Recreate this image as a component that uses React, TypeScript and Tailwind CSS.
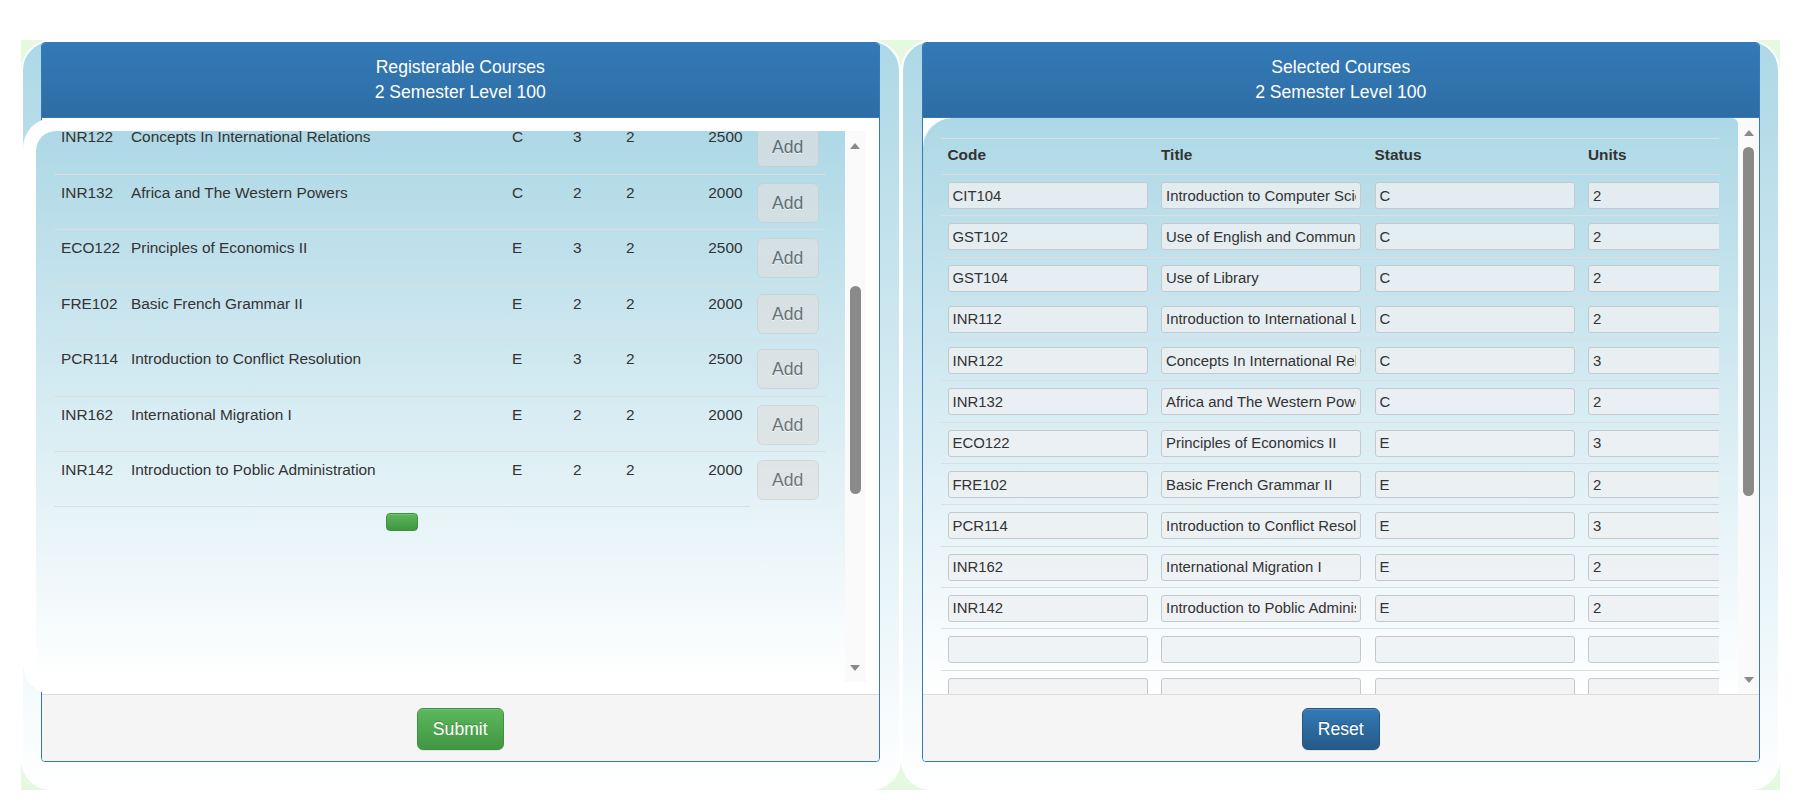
import React from 'react';

const registerable = [
  ['INR122', 'Concepts In International Relations', 'C', '3', '2', '2500'],
  ['INR132', 'Africa and The Western Powers', 'C', '2', '2', '2000'],
  ['ECO122', 'Principles of Economics II', 'E', '3', '2', '2500'],
  ['FRE102', 'Basic French Grammar II', 'E', '2', '2', '2000'],
  ['PCR114', 'Introduction to Conflict Resolution', 'E', '3', '2', '2500'],
  ['INR162', 'International Migration I', 'E', '2', '2', '2000'],
  ['INR142', 'Introduction to Poblic Administration', 'E', '2', '2', '2000'],
];

const selected = [
  ['CIT104', 'Introduction to Computer Science', 'C', '2'],
  ['GST102', 'Use of English and Communication Skills', 'C', '2'],
  ['GST104', 'Use of Library', 'C', '2'],
  ['INR112', 'Introduction to International Law', 'C', '2'],
  ['INR122', 'Concepts In International Relations', 'C', '3'],
  ['INR132', 'Africa and The Western Powers', 'C', '2'],
  ['ECO122', 'Principles of Economics II', 'E', '3'],
  ['FRE102', 'Basic French Grammar II', 'E', '2'],
  ['PCR114', 'Introduction to Conflict Resolution', 'E', '3'],
  ['INR162', 'International Migration I', 'E', '2'],
  ['INR142', 'Introduction to Poblic Administration', 'E', '2'],
  ['', '', '', ''],
  ['', '', '', ''],
  ['', '', '', ''],
];

function Arrow({ down }: { down?: boolean }) {
  return (
    <svg width="10" height="6" viewBox="0 0 10 6" className="block flex-shrink-0">
      <polygon points={down ? '0,0 10,0 5,6' : '0,6 10,6 5,0'} fill="#8a8a8a" />
    </svg>
  );
}

interface ScrollbarProps {
  thumbOffset: string;
  thumbHeight: string;
}

function Scrollbar({ thumbOffset, thumbHeight }: ScrollbarProps) {
  return (
    <div className="flex w-[21px] flex-shrink-0 flex-col items-center bg-[#fafafa] pt-[12px] pb-[11px]">
      <Arrow />
      <div className={`w-[11px] rounded-full bg-[#8a8a8a] ${thumbOffset} ${thumbHeight}`} />
      <div className="mt-auto">
        <Arrow down />
      </div>
    </div>
  );
}

function PanelHeading({ title }: { title: string }) {
  return (
    <div className="flex h-[75px] flex-col items-center justify-center rounded-t-[3px] border-b border-[#337ab7] bg-linear-to-b from-[#337ab7] to-[#2e6da4] text-[17.6px] leading-[25px] text-white">
      <div>{title}</div>
      <div>2 Semester Level 100</div>
    </div>
  );
}

function RegisterablePanel() {
  return (
    <div className="rounded-[4px] border border-[#337ab7] bg-white">
      <PanelHeading title="Registerable Courses" />

      <div className="h-[576px] bg-white">
        <div className="-ml-[19px] h-full rounded-l-[30px] bg-white pt-[13px] pr-[13px] pb-[12px] pl-[13px]">
          <div className="flex h-full">
            <div className="flex-1 overflow-hidden rounded-l-[20px] bg-linear-to-b from-[#add8e6] to-white pr-[19px] pl-[18px]">
              <div className="-mt-[11.6px] text-[15.4px] leading-[22px] text-[#333]">
                {registerable.map((row, i) => {
                  const last = i === registerable.length - 1;
                  return (
                    <div key={row[0]} className="flex h-[55.45px]">
                      <div className="flex w-[696px] border-b border-[#dddddd] pt-[7px]">
                        <div className="w-[70px] pl-[7px]">{row[0]}</div>
                        <div className="w-[381px] pl-[7px]">{row[1]}</div>
                        <div className="w-[61px] pl-[7px]">{row[2]}</div>
                        <div className="w-[53px] pl-[7px]">{row[3]}</div>
                        <div className="w-[61px] pl-[7px]">{row[4]}</div>
                        <div className="flex-1 pr-[7px] text-right">{row[5]}</div>
                      </div>
                      <div
                        className={`w-[76px] pl-[7px] ${last ? '' : 'border-b border-[#dddddd]'}`}
                      >
                        <button
                          type="button"
                          disabled
                          className="mt-[8px] flex h-[40px] w-[62px] items-center justify-center rounded-[6px] border border-[#cccccc] bg-[#e0e0e0] text-[17.6px] text-[#333] opacity-65 [text-shadow:0_1px_0_#fff]"
                        >
                          Add
                        </button>
                      </div>
                    </div>
                  );
                })}

                <div className="flex w-[696px] justify-center">
                  <button
                    type="button"
                    className="mt-[5.5px] h-[18px] w-[32px] rounded-[4px] border border-[#3e8f3e] bg-linear-to-b from-[#5cb85c] to-[#419641] shadow-[inset_0_1px_0_rgba(255,255,255,0.15)]"
                  />
                </div>
              </div>
            </div>

            <Scrollbar thumbOffset="mt-[137px]" thumbHeight="h-[208px]" />
          </div>
        </div>
      </div>

      <div className="flex h-[67px] justify-center rounded-b-[3px] border-t border-[#dddddd] bg-[#f5f5f5] pt-[13px]">
        <button
          type="button"
          className="h-[42px] w-[87px] rounded-[6px] border border-[#3e8f3e] bg-linear-to-b from-[#5cb85c] to-[#419641] text-[17.6px] text-white shadow-[inset_0_1px_0_rgba(255,255,255,0.15),0_1px_1px_rgba(0,0,0,0.075)] [text-shadow:0_-1px_0_rgba(0,0,0,0.2)]"
        >
          Submit
        </button>
      </div>
    </div>
  );
}

function Field({ value }: { value: string }) {
  return (
    <input
      readOnly
      value={value}
      className="block h-[27px] w-[200px] rounded-[3px] border border-[#c6c9cb] bg-[#eef0f3]/80 px-[4px] text-[14.9px] text-[#333] outline-none"
    />
  );
}

function SelectedPanel() {
  const headers = ['Code', 'Title', 'Status', 'Units'];

  return (
    <div className="rounded-[4px] border border-[#337ab7] bg-white">
      <PanelHeading title="Selected Courses" />

      <div className="flex h-[576px] bg-white">
        <div className="flex-1 overflow-hidden rounded-tl-[30px] rounded-tr-[6px] bg-linear-to-b from-[#add8e6] to-white pt-[20px] pr-[19px] pl-[18px]">
          <div className="overflow-hidden">
            <div className="w-[854px] text-[15.4px] leading-[22px] text-[#333]">
              <div className="flex h-[36px] border-t border-[#dddddd] pt-[5px] font-bold">
                {headers.map((h) => (
                  <div key={h} className="w-[213.5px] pl-[7px]">
                    {h}
                  </div>
                ))}
              </div>

              {selected.map((row, i) => (
                <div key={i} className="flex h-[41.3px] border-t border-[#dddddd] pt-[7px]">
                  {row.map((cell, j) => (
                    <div key={j} className="w-[213.5px] pl-[7px]">
                      <Field value={cell} />
                    </div>
                  ))}
                </div>
              ))}
            </div>
          </div>
        </div>

        <Scrollbar thumbOffset="mt-[11px]" thumbHeight="h-[349px]" />
      </div>

      <div className="flex h-[67px] justify-center rounded-b-[3px] border-t border-[#dddddd] bg-[#f5f5f5] pt-[13px]">
        <button
          type="button"
          className="h-[42px] w-[78px] rounded-[6px] border border-[#245580] bg-linear-to-b from-[#337ab7] to-[#265a88] text-[17.6px] text-white shadow-[inset_0_1px_0_rgba(255,255,255,0.15),0_1px_1px_rgba(0,0,0,0.075)] [text-shadow:0_-1px_0_rgba(0,0,0,0.2)]"
        >
          Reset
        </button>
      </div>
    </div>
  );
}

export default function App() {
  return (
    <div className="min-h-screen bg-white px-[21px] pt-[40px] font-['Liberation_Sans',Arial,sans-serif]">
      <div className="grid h-[750px] grid-cols-2 bg-[#e4f9e0]">
        <div className="rounded-[30px] border-2 border-white bg-linear-to-b from-[#add8e6] to-white pr-[19px] pb-[26px] pl-[18px]">
          <RegisterablePanel />
        </div>
        <div className="rounded-[30px] border-2 border-white bg-linear-to-b from-[#add8e6] to-white pr-[18px] pb-[26px] pl-[19px]">
          <SelectedPanel />
        </div>
      </div>
    </div>
  );
}
